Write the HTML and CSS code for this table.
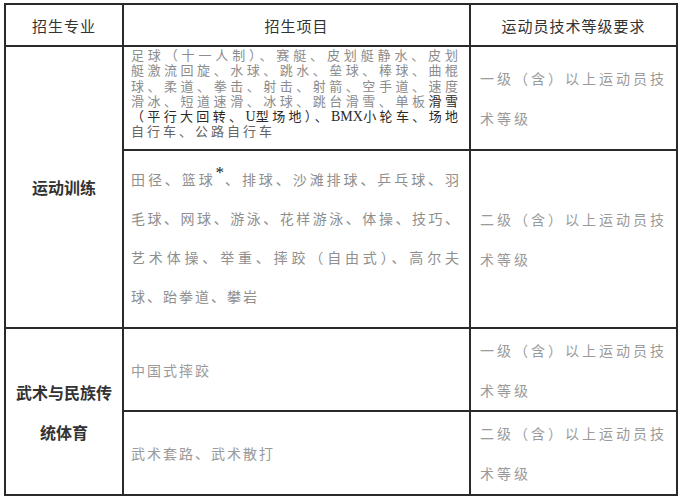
FILE: index.html
```html
<!DOCTYPE html>
<html lang="zh-CN">
<head>
<meta charset="utf-8">
<title>招生专业</title>
<link rel="stylesheet" href="styles.css">
</head>
<body>
<table class="req">
  <colgroup>
    <col class="c-major">
    <col class="c-item">
    <col class="c-level">
  </colgroup>
  <thead>
    <tr class="r-head">
      <th>招生专业</th>
      <th>招生项目</th>
      <th>运动员技术等级要求</th>
    </tr>
  </thead>
  <tbody>
    <tr class="r-1a">
      <td rowspan="2" class="major">运动训练</td>
      <td class="items dense">
        <span class="ln j">足球（十一人制）、赛艇、皮划艇静水、皮划</span>
        <span class="ln j">艇激流回旋、水球、跳水、垒球、棒球、曲棍</span>
        <span class="ln j">球、柔道、拳击、射击、射箭、空手道、速度</span>
        <span class="ln j">滑冰、短道速滑、冰球、跳台滑雪、单板<span class="dk">滑雪</span></span>
        <span class="ln j dk">（平行大回转、<span class="lat">U</span>型场地）、<span class="lat">BMX</span>小轮车、场地</span>
        <span class="ln md">自行车、公路自行车</span>
      </td>
      <td class="level">一级（含）以上运动员技术等级</td>
    </tr>
    <tr class="r-1b">
      <td class="items loose">
        <span class="ln j">田径、篮球<span class="star">*</span>、排球、沙滩排球、乒乓球、羽</span>
        <span class="ln j">毛球、网球、游泳、花样游泳、体操、技巧、</span>
        <span class="ln j">艺术体操、举重、摔跤（自由式）、高尔夫</span>
        <span class="ln">球、跆拳道、攀岩</span>
      </td>
      <td class="level">二级（含）以上运动员技术等级</td>
    </tr>
    <tr class="r-2a">
      <td rowspan="2" class="major">武术与民族传统体育</td>
      <td class="items plain">中国式摔跤</td>
      <td class="level">一级（含）以上运动员技术等级</td>
    </tr>
    <tr class="r-2b">
      <td class="items plain">武术套路、武术散打</td>
      <td class="level">二级（含）以上运动员技术等级</td>
    </tr>
  </tbody>
</table>
</body>
</html>
```

FILE: styles.css
```css
html, body {
  margin: 0;
  padding: 0;
  background: #ffffff;
}

body {
  padding: 3px 0 0 4px;
  font-family: "Liberation Serif", "Noto Sans CJK SC", serif;
}

.req {
  border-collapse: collapse;
  table-layout: fixed;
  width: 672px;
}

.c-major { width: 118px; }
.c-item { width: 347px; }
.c-level { width: 207px; }

.req th,
.req td {
  border: 2px solid #2a2a2a;
  padding: 0;
}

.r-head { height: 42px; }
.r-1a { height: 104px; }
.r-1b { height: 178px; }
.r-2a { height: 83px; }
.r-2b { height: 84px; }

.req th {
  font-family: "Noto Sans CJK SC", sans-serif;
  font-weight: 400;
  font-size: 15px;
  letter-spacing: 1px;
  color: #333;
  text-align: center;
  vertical-align: middle;
}

.major {
  font-family: "Noto Sans CJK SC", sans-serif;
  font-weight: 700;
  font-size: 16px;
  line-height: 40px;
  color: #333;
  text-align: center;
  vertical-align: middle;
  padding: 0 8px !important;
}

.items {
  font-size: 14px;
  letter-spacing: 2px;
  padding: 0 8px 0 7px !important;
}

.ln {
  display: block;
  white-space: nowrap;
}

.ln.j {
  text-align: justify;
  text-align-last: justify;
}

.dense {
  vertical-align: top;
  font-size: 13px;
  letter-spacing: 3px;
  line-height: 15.3px;
  color: #8c8c8c;
  padding-top: 1px !important;
}

.dense .dk { color: #2a2a2a; }
.dense .md { color: #666; }

.lat {
  font-size: 14px;
  letter-spacing: 0;
}

.loose {
  vertical-align: middle;
  line-height: 39px;
  color: #8f8f8f;
}

.star {
  font-size: 17px;
  line-height: 0;
  vertical-align: 7px;
  color: #222;
  letter-spacing: 0;
}

.plain {
  vertical-align: middle;
  color: #9a9a9a;
}

.level {
  font-family: "Noto Sans CJK SC", sans-serif;
  font-size: 14px;
  letter-spacing: 3px;
  line-height: 40px;
  color: #9a9a9a;
  vertical-align: middle;
  padding: 0 4px 0 9px !important;
}
```
